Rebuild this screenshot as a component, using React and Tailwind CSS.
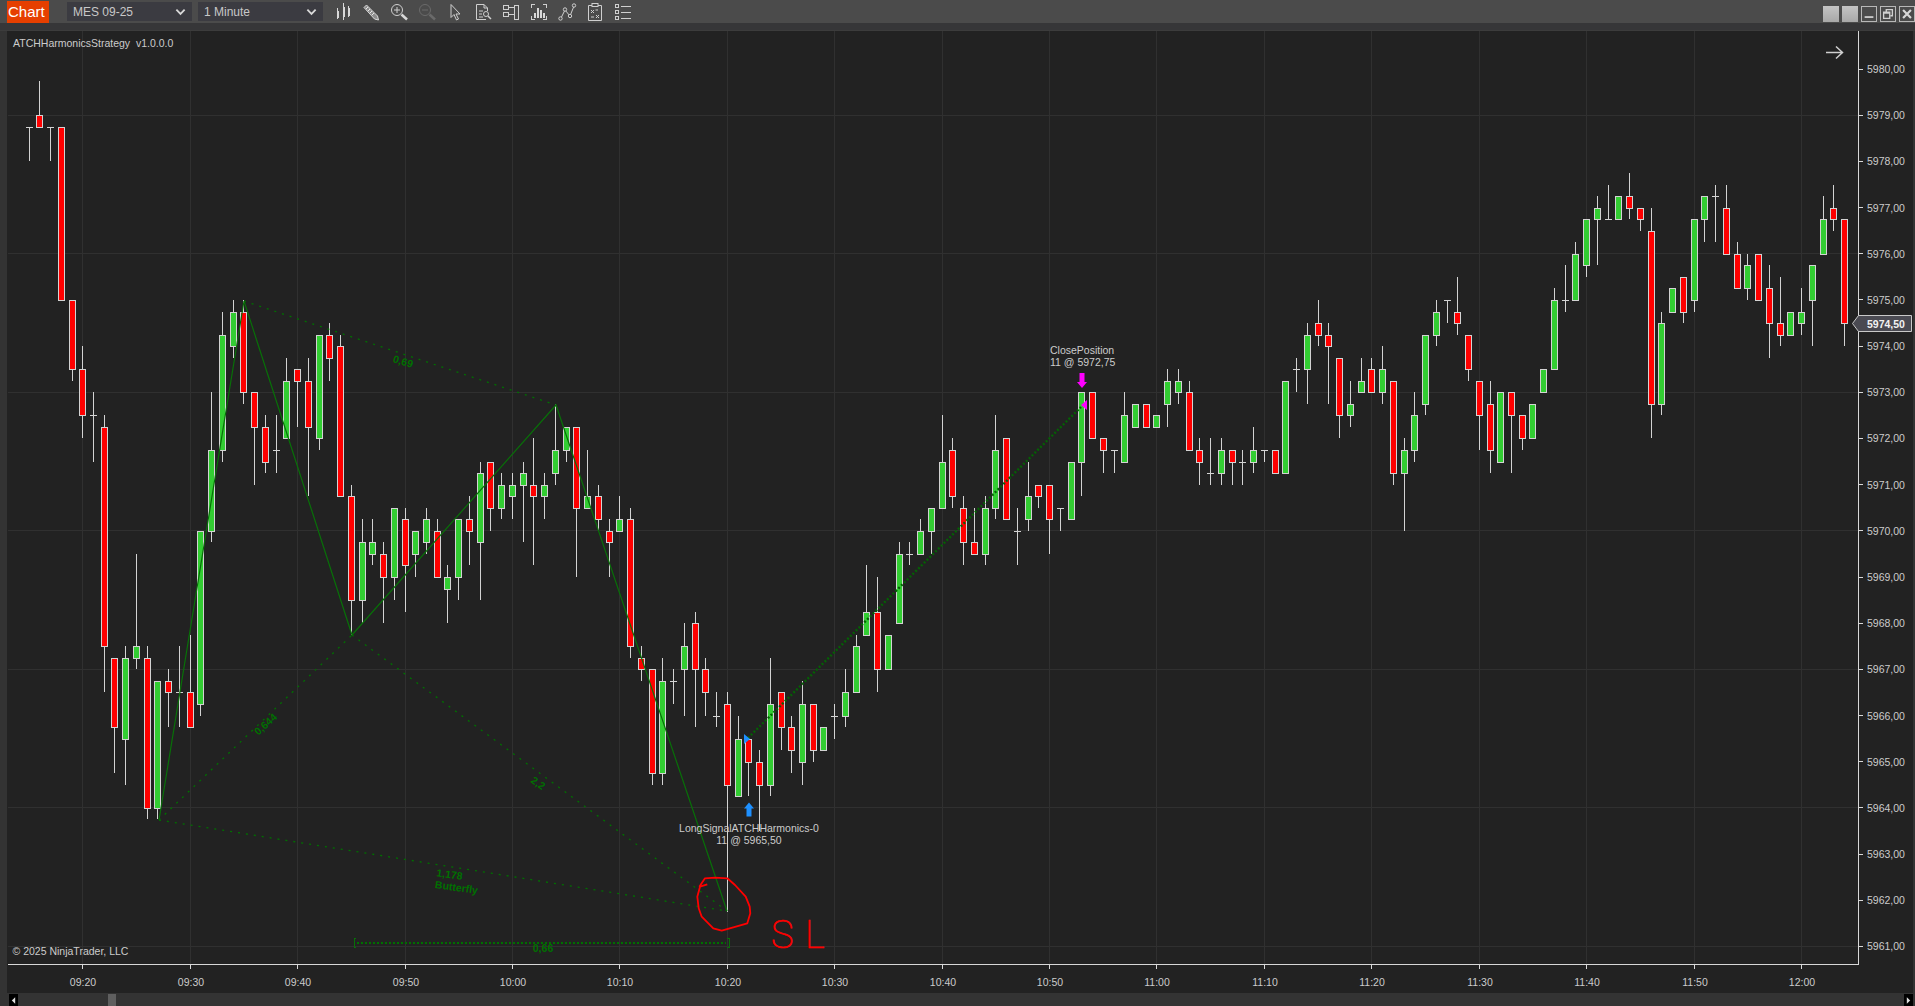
import React from "react";

const BARS = [
  ["d",18.75,18.75,18.75,18],["r",19,18.75,19.75],["d",18.75,18.75,18.75,18],["r",18.75,15],["r",15,13.5,15,13.25],
  ["r",13.5,12.5,14,12],["d",12.5,12.5,13,11.5],["r",12.25,7.5,12.5,6.5],["r",7.25,5.75,7.25,4.75],["g",7.25,5.5,7.5,4.5],
  ["g",7.5,7.25,9.5,7],["r",7.25,4,7.5,3.75],["g",6.75,4,6.75,3.75],["r",6.75,6.5,7,5.75],["d",6.5,6.5,7.5,5.75],
  ["r",6.5,5.75,7.75,5.75],["g",10,6.25,10,6],["g",11.75,10,13,9.75],["g",14.25,11.75,14.75,11.5],["g",14.75,14,15,13.75],
  ["r",14.75,13,15,12.75],["r",13,12.25,13,11],["r",12.25,11.5,12.5,11.25],["d",11.75,11.75,12.5,11.25],["g",13.25,12,13.75,12],
  ["r",13.5,13.25,13.5,12.25],["r",13.25,12.25,13.75,10.75],["g",14.25,12,14.25,11.75],["r",14.25,13.75,14.5,13.25],["r",14,10.75,14.25,10.75],
  ["r",10.75,8.5,11,7.75],["g",9.75,8.5,10.25,8],["g",9.75,9.5,10.25,9.25],["r",9.5,9,9.75,8],["g",10.5,9,10.5,8.5],
  ["r",10.25,9.25,10.5,8.25],["g",10,9.5,10,9],["g",10.25,9.75,10.5,9.5],["r",10,9,10.25,9],["g",9,8.75,9.25,8],
  ["g",10.25,9,10.25,8.5],["r",10.25,10,10.75,9.25],["g",11.25,9.75,11.5,8.5],["r",11.5,10.5,11.5,10],["g",11,10.5,11.25,10.25],
  ["g",11,10.75,11.25,10.25],["g",11.25,11,11.5,9.75],["r",11,10.75,12,9.25],["g",11,10.75,11.25,10.25],["g",11.75,11.25,12.75,11],
  ["g",12.25,11.75,12.25,11.5],["r",12.25,10.5,12.25,9],["g",10.75,10.5,11.75,10.5],["r",10.75,10.25,11,10],["r",10,9.75,10.25,9],
  ["g",10.25,10,10.75,10],["r",10.25,7.5,10.5,7.25],["r",7.25,7,7.5,6.75],["r",7,4.75,7,4.5],["g",6.75,4.75,7.25,4.5],
  ["d",6.75,6.75,7,6.25],["g",7.5,7,8,6],["r",8,7,8.25,5.75],["r",7,6.5,7.25,6],["d",6,6,6.5,5.75],
  ["r",6.25,4.5,6.5,1.75],["g",5.5,4.25,6,4.25],["r",5.5,5,5.5,4.25],["r",5,4.5,5.25,3.5],["g",6.25,4.5,7.25,4.25],
  ["r",6.5,5.75,6.5,5.25],["r",5.75,5.25,6,4.75],["g",6.25,5,6.75,4.5],["r",6.25,5.25,6.25,5],["g",5.75,5.25],
  ["d",6,6,6.25,5.5],["g",6.5,6,7,5.75],["g",7.5,6.5,7.75,6.5],["g",8.25,7.75,9.25,7.75],["r",8.25,7,9,6.5],
  ["g",7.75,7],["g",9.5,8,9.75,8],["d",9.5,9.5,9.75,9.25],["g",10,9.5,10.25,9.5],["g",10.5,10,10.5,9.5],
  ["g",11.5,10.5,12.5,10.5],["r",11.75,10.75,12,10.5],["r",10.5,9.75,10.75,9.25],["r",9.75,9.5,10.5,9.5],["g",10.5,9.5,10.75,9.25],
  ["g",11.75,10.5,12.5,10.25],["r",12,10.25],["d",10,10,10.5,9.25],["g",10.75,10.25,11.5,10],["r",11,10.75,11,10.5],
  ["r",11,10.25,11,9.5],["d",10.5,10.5,10.5,10],["g",11.5,10.25],["g",13,11.5,13,10.75],["r",13,12],
  ["r",12,11.75,12,11.25],["d",11.75,11.75,11.75,11.25],["g",12.5,11.5,13,11.5],["g",12.75,12.25],["r",12.75,12.25],
  ["g",12.5,12.25],["g",13.25,12.75,13.5,12.25],["g",13.25,13,13.5,12.75],["r",13,11.75,13.25,11.75],["r",11.75,11.5,12,11],
  ["d",11.25,11.25,12,11],["g",11.75,11.25,12,11],["r",11.75,11.5,11.75,11],["d",11.5,11.5,11.75,11],["g",11.75,11.5,12.25,11.25],
  ["d",11.75,11.75,11.75,11.5],["r",11.75,11.25],["g",13.25,11.25],["d",13.5,13.5,13.75,13],["g",14.25,13.5,14.5,12.75],
  ["r",14.5,14.25,15,14],["r",14.25,14,14.5,12.75],["r",13.75,12.5,13.75,12],["g",12.75,12.5,13.25,12.25],["g",13.25,13,13.75,13],
  ["r",13.5,13,13.75,13],["g",13.5,13,14,12.75],["r",13.25,11.25,13.25,11],["g",11.75,11.25,12,10],["g",12.5,11.75,13,11.5],
  ["g",14.25,12.75,14.25,12.5],["g",14.75,14.25,15,14],["d",15,15,15,14.5],["r",14.75,14.5,15.5,14.25],["r",14.25,13.5,14.25,13.25],
  ["r",13.25,12.5,13.25,11.75],["r",12.75,11.75,13.25,11.25],["g",13,11.5],["r",13,12.5,13,11.25],["r",12.5,12,12.5,11.75],
  ["g",12.75,12],["g",13.5,13],["g",15,13.5,15.25,13.5],["d",15,15,15.75,14.75],["g",16,15,16.25,15],
  ["g",16.75,15.75,16.75,15.5],["g",17,16.75,17.25,15.75],["d",16.75,16.75,17.5,16.75],["g",17.25,16.75],["r",17.25,17,17.75,16.75],
  ["r",17,16.75,17,16.5],["r",16.5,12.75,17,12],["g",14.5,12.75,14.75,12.5],["g",15.25,14.75],["r",15.5,14.75,15.5,14.5],
  ["g",16.75,15,16.75,14.75],["g",17.25,16.75,17.25,16.25],["d",17.25,17.25,17.5,16.25],["r",17,16,17.5,16],["r",16,15.25,16.25,15.25],
  ["g",15.75,15.25,16,15],["r",16,15],["r",15.25,14.5,15.75,13.75],["r",14.5,14.25,15.5,14],["g",14.75,14.25],
  ["g",14.75,14.5,15.25,14.25],["g",15.75,15,15.75,14],["g",16.75,16,17.25,16],["r",17,16.75,17.5,16.5],["r",16.75,14.5,16.75,14],
];

const colX = (i) => Math.floor(29.03 + 10.7425 * i);
const Y = (p) => Math.round(115.3 + (19 - p) * 46.17);
const yy = (p) => 115.3 + (19 - p) * 46.17;

const TIMES = ["09:20","09:30","09:40","09:50","10:00","10:10","10:20","10:30","10:40","10:50","11:00","11:10","11:20","11:30","11:40","11:50","12:00"];
const PRICES = Array.from({ length: 20 }, (_, k) => 5980 - k);

const X_PT = [159, 820];
const A_PT = [244, 301];
const B_PT = [352, 635];
const C_PT = [556, 405];
const D_PT = [727, 911];

const SOLID = "#087008";
const DOT = "#007000";
const TXT = "#cccccc";

function Candle({ bar, i }) {
  const [t, top, bot, hi = top, lo = bot] = bar;
  const x = colX(i);
  const yTop = Y(top);
  const yBot = Y(bot);
  const yHi = Y(hi);
  const yLo = Y(lo);
  return (
    <g shapeRendering="crispEdges">
      <rect x={x} y={yHi} width={1} height={Math.max(yLo - yHi, 1)} fill="#d3d3d3" />
      {t === "d" ? (
        <rect x={x - 3} y={yTop} width={7} height={1} fill="#d3d3d3" />
      ) : (
        <>
          <rect x={x - 3} y={yTop} width={7} height={yBot - yTop + 1} fill="#d3d3d3" />
          <rect x={x - 2} y={yTop + 1} width={5} height={yBot - yTop - 1} fill={t === "r" ? "#ff0000" : "#32cd32"} />
        </>
      )}
    </g>
  );
}

function Line({ a, b, dash, color = DOT, w = 1.3 }) {
  return <line x1={a[0]} y1={a[1]} x2={b[0]} y2={b[1]} stroke={color} strokeWidth={w} strokeDasharray={dash} />;
}

function GreenLabel({ x, y, r, children, size = 10.5 }) {
  return (
    <text x={x} y={y} textAnchor="middle" fontSize={size} fontWeight="700" fill="#007000" transform={`rotate(${r} ${x} ${y})`}>
      {children}
    </text>
  );
}

const circlePts = [[322,553],[300,560],[292,590],[296,625],[305,650],[340,685],[365,692],[400,682],[442,670],[451,640],[449,620],[437,590],[405,555],[382,535],[345,533],[315,535],[298,560]];
const circlePath = circlePts.map(([a, b]) => `${(600 + a / 3).toFixed(1)},${(700 + b / 3).toFixed(1)}`).join(" ");

function Chart() {
  return (
    <svg viewBox="7 31 1906 962" width="1906" height="962" className="block">
      <rect x="7" y="31" width="1906" height="962" fill="#222222" />
      <g shapeRendering="crispEdges" fill="#303030">
        {[19, 16, 13, 10, 7, 4, 1].map((p) => (
          <rect key={p} x="8" y={Math.floor(yy(p))} width="1850" height="1" />
        ))}
        {TIMES.map((t, k) => (
          <rect key={t} x={colX(5 + k * 10)} y="31" width="1" height="933" />
        ))}
      </g>
      {BARS.map((b, i) => (
        <Candle key={i} bar={b} i={i} />
      ))}

      <polyline points={[X_PT, A_PT, B_PT, C_PT, D_PT].map((p) => p.join(",")).join(" ")} fill="none" stroke={SOLID} strokeWidth="1.2" />
      <Line a={A_PT} b={C_PT} dash="2 6" />
      <Line a={X_PT} b={B_PT} dash="2 6" />
      <Line a={B_PT} b={D_PT} dash="2 6" />
      <Line a={X_PT} b={D_PT} dash="2 6" />
      <g shapeRendering="crispEdges">
        <line x1="357" y1="942.5" x2="726" y2="942.5" stroke={DOT} strokeWidth="2" strokeDasharray="2 2" />
        <path d="M356 938.5h-2v9h2 M727 938.5h2v9h-2" fill="none" stroke={SOLID} strokeWidth="1" />
      </g>
      <GreenLabel x={402} y={365} r={17}>0,69</GreenLabel>
      <GreenLabel x={268} y={727} r={-42}>0,644</GreenLabel>
      <GreenLabel x={536} y={786} r={36}>2,2</GreenLabel>
      <GreenLabel x={449} y={878} r={8}>1,178</GreenLabel>
      <GreenLabel x={456} y={891} r={8}>Butterfly</GreenLabel>
      <GreenLabel x={543} y={952} r={0}>0,66</GreenLabel>

      <line x1="748" y1="738" x2="1081" y2="407" stroke="#056005" strokeWidth="2.4" strokeDasharray="2 2" />

      <polygon points="744,734 750,739 744,744" fill="#1e90ff" />
      <polygon points="1087,400 1081,405 1087,410" fill="#ff00ff" />
      <path d="M749 802.5l5 6h-2.5v8h-5v-8h-2.5z" fill="#1e90ff" />
      <path d="M1082 388l-5-6h2.5v-9h5v9h2.5z" fill="#ff00ff" />

      <g fontSize="10.5" fill={TXT}>
        <text x="749" y="832" textAnchor="middle">LongSignalATCHHarmonics-0</text>
        <text x="749" y="844" textAnchor="middle">11 @ 5965,50</text>
        <text x="1050" y="354">ClosePosition</text>
        <text x="1050" y="366">11 @ 5972,75</text>
        <text x="13" y="47" xmlSpace="preserve">ATCHHarmonicsStrategy  v1.0.0.0</text>
        <text x="12.5" y="955">© 2025 NinjaTrader, LLC</text>
      </g>

      <polyline points={circlePath} fill="none" stroke="#ff0000" strokeWidth="1.8" strokeLinejoin="round" />
      <text x="771 805" y="948" fontSize="38" fontWeight="100" fill="#ff0000" stroke="#ff0000" strokeWidth="0.7" style={{ fontFamily: "Roboto, sans-serif" }}>SL</text>

      <path d="M1826 52.5h16 M1836 46.5l6.5 6-6.5 6" fill="none" stroke="#d0d0d0" strokeWidth="1.5" />

      <g shapeRendering="crispEdges" fill="#d8d8d8">
        <rect x="1858" y="31" width="1" height="933" />
        <rect x="8" y="964" width="1851" height="1" />
        {PRICES.map((p) => (
          <rect key={p} x="1858" y={Math.floor(yy(p - 5960))} width="5" height="1" />
        ))}
        {TIMES.map((t, k) => (
          <rect key={t} x={colX(5 + k * 10)} y="964" width="1" height="5" />
        ))}
      </g>
      <g fontSize="10.5" fill={TXT}>
        {PRICES.map((p) => (
          <text key={p} x="1867" y={yy(p - 5960) + 4}>{`${p},00`}</text>
        ))}
        {TIMES.map((t, k) => (
          <text key={t} x={colX(5 + k * 10) + 1} y="986" textAnchor="middle">{t}</text>
        ))}
      </g>

      <polygon points="1852.5,323.5 1858.5,315.5 1911.5,315.5 1911.5,331.5 1858.5,331.5" fill="#4a4a52" stroke="#c8c8c8" strokeWidth="1" />
      <text x="1867" y="328" fontSize="10.5" fontWeight="700" fill="#f2f2f2">5974,50</text>
    </svg>
  );
}

const IC = { fill: "none", stroke: "#cfcfcf", strokeWidth: 1 };

function Icon({ children }) {
  return (
    <div className="w-[28px] h-[20px] flex items-center justify-center">
      <svg viewBox="0 0 20 20" width="20" height="20">{children}</svg>
    </div>
  );
}

function Toolbar() {
  return (
    <div className="h-[23px] flex items-center bg-[#4b4b4b] shrink-0">
      <div className="ml-[7px] w-[42px] h-[22px] bg-[#e63f00] text-white text-[15px] leading-[22px] pl-[1px]">Chart</div>
      <Dropdown label="MES 09-25" className="ml-[18px]" />
      <Dropdown label="1 Minute" className="ml-[6px]" />
      <div className="ml-[6px] flex items-center">
        <Icon>
          <g fill="#d8d8d8" stroke="#d8d8d8" strokeWidth="1" shapeRendering="crispEdges">
            <path d="M4.5 6v11 M10.5 1v17 M15.5 4v11" />
            <rect x="4" y="9" width="1" height="6" />
            <rect x="10" y="5" width="1" height="9" />
            <rect x="15" y="6" width="1" height="7" />
          </g>
        </Icon>
        <Icon>
          <path d="M3 5.5L5.5 3l11 11 1 4-4-1z" fill="#8e8e8e" stroke="#d8d8d8" strokeWidth="1" />
          <path d="M5 7l2-2 M7 9l2-2 M9 11l2-2 M11 13l2-2" stroke="#e8e8e8" strokeWidth="1" />
        </Icon>
        <Icon>
          <circle cx="8" cy="8" r="5.5" {...IC} />
          <path d="M5 8h6 M8 5v6" {...IC} />
          <path d="M12.5 12.5l5.5 5" stroke="#d8d8d8" strokeWidth="2.5" />
        </Icon>
        <Icon>
          <circle cx="8" cy="8" r="5.5" fill="none" stroke="#6a6a6a" />
          <path d="M5 8h6" stroke="#6a6a6a" />
          <path d="M12.5 12.5l5.5 5" stroke="#6a6a6a" strokeWidth="2.5" />
        </Icon>
        <Icon>
          <path d="M6 2.5v13l3-3 2.5 5.5 2-1-2.5-5h4z" {...IC} />
        </Icon>
        <Icon>
          <path d="M13 17.5H3.5v-15H11l3.5 3.5v3" {...IC} />
          <path d="M11 2.5V6h3.5 M6 9h4 M6 12h3 M6 15h4" {...IC} />
          <circle cx="13" cy="12" r="2.5" {...IC} />
          <path d="M15 14l3 3" stroke="#cfcfcf" strokeWidth="1.5" />
        </Icon>
        <Icon>
          <g {...IC} shapeRendering="crispEdges">
            <rect x="2.5" y="3.5" width="5" height="4" />
            <rect x="2.5" y="10.5" width="5" height="4" />
            <path d="M7.5 5.5h6 M7.5 12.5h6" />
            <rect x="13.5" y="3.5" width="4" height="14" />
          </g>
        </Icon>
        <Icon>
          <g {...IC} shapeRendering="crispEdges">
            <path d="M2.5 6V2.5H6 M14 2.5h3.5V6 M2.5 14v3.5H6 M14 17.5h3.5V14" />
          </g>
          <g fill="#d8d8d8" shapeRendering="crispEdges">
            <rect x="5" y="11" width="2" height="5" />
            <rect x="8" y="6" width="2" height="10" />
            <rect x="11" y="8" width="2" height="8" />
            <rect x="14" y="11" width="1.5" height="5" />
          </g>
        </Icon>
        <Icon>
          <path d="M4 16L8 8l5 6 4-10" {...IC} />
          <circle cx="3.5" cy="16.5" r="1.7" {...IC} fill="#4b4b4b" />
          <circle cx="8" cy="7.5" r="1.7" {...IC} fill="#4b4b4b" />
          <circle cx="13" cy="14" r="1.7" {...IC} fill="#4b4b4b" />
          <circle cx="17" cy="3.5" r="1.7" {...IC} fill="#4b4b4b" />
        </Icon>
        <Icon>
          <g {...IC}>
            <path d="M7 3.5H3.5v15h13v-15H13" />
            <rect x="7" y="1.5" width="6" height="3" />
            <path d="M6 8l3 3 M9 8l-3 3 M11 13l3 3 M14 13l-3 3 M13 8h-2.5 M6 15h3" />
          </g>
        </Icon>
        <Icon>
          <g {...IC} shapeRendering="crispEdges">
            <rect x="2.5" y="2.5" width="3" height="3" />
            <rect x="2.5" y="8.5" width="3" height="3" />
            <rect x="2.5" y="14.5" width="3" height="3" />
            <path d="M8 4h10 M8 10h10 M8 16h10" />
          </g>
        </Icon>
      </div>
      <div className="ml-auto flex items-center gap-[3px] pt-[5px]">
        <div className="w-[16px] h-[16px] bg-gradient-to-b from-[#c4c4c4] to-[#a8a8a8]" />
        <div className="w-[16px] h-[16px] bg-gradient-to-b from-[#c4c4c4] to-[#a8a8a8]" />
        <WinBtn><path d="M3 11.5h10" stroke="#d0d0d0" strokeWidth="2" /></WinBtn>
        <WinBtn>
          <path d="M6 5V3h7v7h-2 M3 6h7v7H3z M3 7h7" fill="none" stroke="#d0d0d0" strokeWidth="1.5" />
        </WinBtn>
        <WinBtn><path d="M3.5 3.5l9 9 M12.5 3.5l-9 9" stroke="#d8d8d8" strokeWidth="2.5" /></WinBtn>
      </div>
    </div>
  );
}

function WinBtn({ children }) {
  return (
    <div className="w-[16px] h-[16px] border border-[#b8b8b8] bg-[#4b4b4b] flex items-center justify-center">
      <svg viewBox="0 0 16 16" width="14" height="14">{children}</svg>
    </div>
  );
}

function Dropdown({ label, className }) {
  return (
    <div className={`w-[125px] h-[19px] bg-[#3b3b41] flex items-center pl-[6px] pr-[6px] text-[12px] text-[#c8c8c8] ${className}`}>
      <span className="flex-1">{label}</span>
      <svg viewBox="0 0 12 8" width="11" height="8">
        <path d="M1.5 1.5L6 6l4.5-4.5" fill="none" stroke="#d8d8d8" strokeWidth="2" />
      </svg>
    </div>
  );
}

function ScrollBtn({ dir }) {
  return (
    <div className="w-[9px] h-[12px] bg-black flex items-center justify-center">
      <svg viewBox="0 0 6 8" width="5" height="7">
        <polygon points={dir === "l" ? "5,0 1,4 5,8" : "1,0 5,4 1,8"} fill="#e0e0e0" />
      </svg>
    </div>
  );
}

export default function App() {
  return (
    <div className="w-screen h-screen overflow-hidden flex flex-col bg-[#333333] [font-family:'Liberation_Sans',Arial,sans-serif]">
      <Toolbar />
      <div className="h-[8px] shrink-0 bg-[#363638] border-b border-[#3c3c3c]" />
      <div className="flex shrink-0 pl-[7px]">
        <Chart />
      </div>
      <div className="flex-1 flex items-start pl-[9px] pr-[2px] pt-px">
        <ScrollBtn dir="l" />
        <div className="ml-[90px] w-[8px] h-[12px] bg-[#5f5f5f]" />
        <div className="flex-1" />
        <ScrollBtn dir="r" />
      </div>
    </div>
  );
}
